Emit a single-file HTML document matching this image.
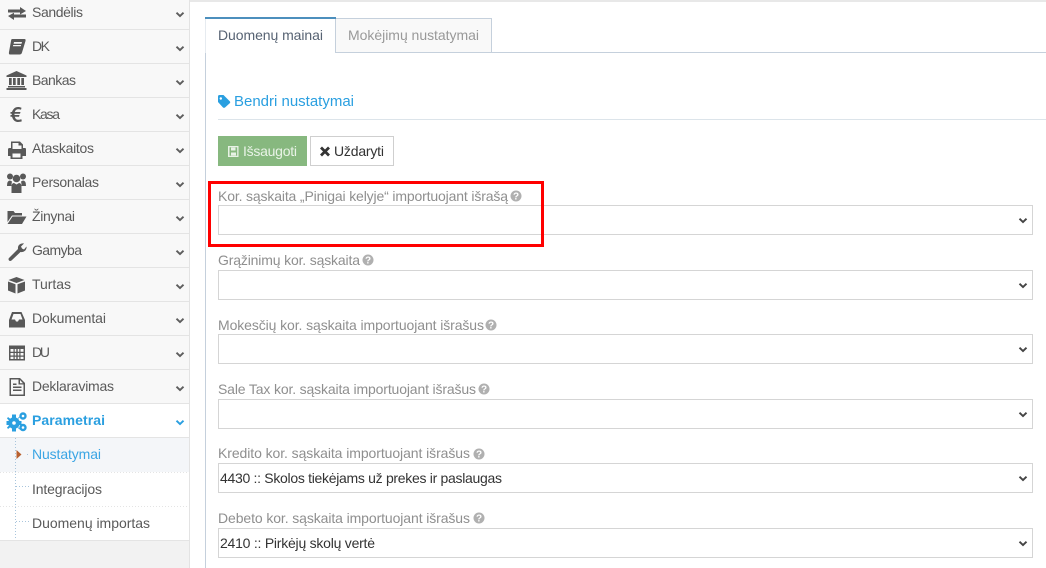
<!DOCTYPE html>
<html lang="lt"><head><meta charset="utf-8"><title>Nustatymai</title>
<style>
html,body{margin:0;padding:0;background:#fff;width:1046px;height:568px;overflow:hidden}
svg{display:block}
text{font-family:"Liberation Sans",sans-serif;font-size:14px}
.m text{fill:#5a5a5a}
.l text{fill:#8f8f8f}
</style></head><body>
<svg width="1046" height="568" viewBox="0 0 1046 568" xmlns="http://www.w3.org/2000/svg">
<defs>
<path id="ch" d="M-3.500 -1.800 L0 1.600 L3.500 -1.800" fill="none" stroke-width="1.900"/>
<g id="q"><circle r="5.500" fill="#b0b0b0"/><text x="0" y="3.700" text-anchor="middle" style="font-size:10px;font-weight:bold" fill="#fff">?</text></g>
</defs>
<!-- sidebar -->
<rect width="189" height="568" fill="#f2f2f2"/>
<rect width="189" height="403" fill="#f8f8f8"/>
<rect x="0" y="404" width="189" height="136" fill="#fff"/>
<rect x="0" y="438" width="189" height="34" fill="#f4f6f9"/>
<rect x="189" y="0" width="1" height="568" fill="#e3e3e3"/>
<g fill="#e4e4e4">
<rect y="29" width="189" height="1"/><rect y="63" width="189" height="1"/><rect y="97" width="189" height="1"/><rect y="131" width="189" height="1"/><rect y="165" width="189" height="1"/><rect y="199" width="189" height="1"/><rect y="233" width="189" height="1"/><rect y="267" width="189" height="1"/><rect y="301" width="189" height="1"/><rect y="335" width="189" height="1"/><rect y="369" width="189" height="1"/><rect y="403" width="189" height="1"/><rect y="437" width="189" height="1"/><rect y="540" width="189" height="1"/>
</g>
<path d="M0 472.500H189M0 506.500H189" stroke="#e4e4e4" stroke-dasharray="1 2"/>
<path d="M15.500 438V539" stroke="#a9c5dc" stroke-dasharray="1 2"/>
<path d="M16 486.500H29M16 521.500H29M27 454.500H29" stroke="#a9c5dc" stroke-dasharray="1 2"/>
<path d="M16.500 450L21.500 454.500L16.500 459Z" fill="#b8602f"/>
<g class="m">
<text x="32" y="17" textLength="51">Sandėlis</text>
<text x="32" y="51" textLength="18">DK</text>
<text x="32" y="85" textLength="44">Bankas</text>
<text x="32" y="119" textLength="28">Kasa</text>
<text x="32" y="153" textLength="62">Ataskaitos</text>
<text x="32" y="187" textLength="67">Personalas</text>
<text x="32" y="221" textLength="43">Žinynai</text>
<text x="32" y="255" textLength="50">Gamyba</text>
<text x="32" y="289" textLength="39">Turtas</text>
<text x="32" y="323" textLength="74">Dokumentai</text>
<text x="32" y="357" textLength="18">DU</text>
<text x="32" y="391" textLength="82">Deklaravimas</text>
<text x="32" y="494" textLength="70">Integracijos</text>
<text x="32" y="528" textLength="118">Duomenų importas</text>
</g>
<text x="32" y="425" textLength="73" fill="#2a9fe0" style="font-weight:bold">Parametrai</text>
<text x="32" y="459" textLength="69" fill="#3aa5e4">Nustatymai</text>
<!-- chevrons -->
<g stroke="#5e5e5e">
<use href="#ch" x="180" y="14.500"/><use href="#ch" x="180" y="48.500"/><use href="#ch" x="180" y="82.500"/><use href="#ch" x="180" y="116.500"/><use href="#ch" x="180" y="150.500"/><use href="#ch" x="180" y="184.500"/><use href="#ch" x="180" y="218.500"/><use href="#ch" x="180" y="252.500"/><use href="#ch" x="180" y="286.500"/><use href="#ch" x="180" y="320.500"/><use href="#ch" x="180" y="354.500"/><use href="#ch" x="180" y="388.500"/>
</g>
<use href="#ch" x="180" y="422.500" stroke="#2a9fe0"/>
<!-- sidebar icons -->
<g fill="#585858">
<path d="M8 9.500H20V7L26 11L20 14.500V12.500H8ZM26 14.500V17.500H14V20L8 16L14 12.800V14.500Z"/>
<path d="M12 39H24.500Q26 39 25.500 41L22 52.500Q21.500 54.500 19.500 54.500H10Q8.500 54.500 9 52L11 41Q11.300 39 12 39ZM14 42L13.600 43.700H21.500L22 42ZM13.200 45L12.900 46.200H20.800L21.100 45Z" fill-rule="evenodd"/>
<path d="M16.500 71L26.500 75.500V77H6.500V75.500ZM9 78H11.700V85H9ZM13 78H15.700V85H13ZM17.300 78H20V85H17.300ZM21.300 78H24V85H21.300ZM8 86H25V87.500H8ZM6.500 88H26.500V90H6.500Z"/>
<path d="M12 112C13 109 15 107 18 107C19.500 107 20.500 107.300 21.500 107.800L21 109.800C20.200 109.400 19.300 109.300 18.200 109.300C16.500 109.300 15.300 110.300 14.800 112H20.500L20 113.700H14.500V115H19.500L19 116.700H14.800C15.400 118.800 16.500 119.800 18.300 119.800C19.500 119.800 20.500 119.500 21.300 119.100L21.800 121.300C20.800 121.800 19.500 122 18.200 122C15 122 13 120 12 116.700H10.500V115H11.800V113.700H10.500V112Z"/>
<path d="M11 141.500H20L23 144.500V148H25Q26 148 26 149.500V156H22.500V159H10.500V156H8V149.500Q8 148 9.500 148H11ZM12.500 143V149H21.500V145.500H18.500V143ZM12.500 153.500V157.500H20.500V153.500Z" fill-rule="evenodd"/>
<circle cx="16.500" cy="178.500" r="3.800"/><circle cx="10" cy="176.500" r="3"/><circle cx="23" cy="176.500" r="3"/>
<path d="M7 186Q7 180.500 10 180.500L12 181.500Q11.500 183 11.500 186H9ZM26 186Q26 180.500 23 180.500L21 181.500Q21.500 183 21.500 186ZM11.500 193V187Q11.500 183 14 183L16.500 184.500L19 183Q21.500 183 21.500 187V193Z"/>
<path d="M7.500 211H13.500L15 213H22V215.500H12L7.500 222ZM12.500 216.500H26.500L22 224H7.500Z"/>
<path d="M9 258L18 249C17.500 245.500 20 243 24 243.500L21 246.500L22 248.500L24 249.500L26.500 246.500C27 250 24 252.500 20.500 252L11.500 260.500Q10 261.500 9 260.500Q8 259 9 258Z"/>
<path d="M16.500 277L24.500 280L16.500 283L8.500 280ZM8 281.500L15.500 284.300V293.500L8 290.500ZM25 281.500V290.500L17.500 293.500V284.300Z"/>
<path d="M12 312H21.500L25 320V327.500H9V320ZM13.500 314L11.500 319.500H15L16 321.500H18L19 319.500H22.500L20.500 314Z" fill-rule="evenodd"/>
<path d="M9 345.500H25V360.500H9ZM10.500 349V351.800H13.500V349ZM14.700 349V351.800H16.300V349ZM17.700 349V351.800H19.300V349ZM20.500 349V351.800H23.500V349ZM10.500 353V355.500H13.500V353ZM14.700 353V355.500H16.300V353ZM17.700 353V355.500H19.300V353ZM20.500 353V355.500H23.500V353ZM10.500 356.700V359H13.500V356.700ZM14.700 356.700V359H16.300V356.700ZM17.700 356.700V359H19.300V356.700ZM20.500 356.700V359H23.500V356.700Z" fill-rule="evenodd"/>
<path d="M9.500 378H20L25 383V396H9.500ZM11 379.500V394.500H23.500V384.500H18.500V379.500ZM13 386.500H21.500V388H13ZM13 389.500H21.500V391H13ZM13 383.500H16.500V385H13ZM20 380L23 383.200H20Z" fill-rule="evenodd"/>
</g>
<g fill="#2a9fe0">
<circle cx="14" cy="423" r="3.800" fill="none" stroke="#2a9fe0" stroke-width="4"/>
<path d="M12 414.500H16V418H12ZM12 428H16V431.500H12ZM6.500 421H9.500V425H6.500ZM18.500 421H21.500V425H18.500ZM8 417L10.500 419L9 420.500L7 418.500ZM20 417L18 419L17.500 418.500L19.500 416.500ZM8 429L10.500 427L9 425.500L7 427.500ZM20 429L18 427L17.500 427.500L19.500 429.500Z"/>
<circle cx="23" cy="416" r="2.500" fill="none" stroke="#2a9fe0" stroke-width="2.400"/>
<circle cx="23" cy="427.500" r="2.500" fill="none" stroke="#2a9fe0" stroke-width="2.400"/>
</g>
<!-- main -->
<rect x="190" y="0" width="856" height="2" fill="#e8e8e8"/>
<rect x="205" y="52" width="841" height="1" fill="#c5d0dc"/>
<rect x="205" y="53" width="1" height="515" fill="#c5d0dc"/>
<rect x="336" y="18" width="156" height="35" fill="#c5d0dc"/>
<rect x="336" y="19" width="155" height="33" fill="#f9f9f9"/>
<rect x="205" y="18" width="131" height="35" fill="#fff"/>
<rect x="205" y="17" width="131" height="2" fill="#4c8fbd"/>
<rect x="335" y="19" width="1" height="34" fill="#c5d0dc"/>
<rect x="205" y="19" width="1" height="34" fill="#e6ebf0"/>
<text x="218" y="40" textLength="105" fill="#576373">Duomenų mainai</text>
<text x="348" y="40" textLength="131" fill="#999">Mokėjimų nustatymai</text>
<path d="M218 96.500Q218 95 219.500 95H223.500L230 101.500Q230.500 102.500 230 103L225 107.500Q224 108.300 223 107.500L218 102ZM220.800 97.300A1.200 1.200 0 1 0 220.801 97.300Z" fill="#2a9fe0" fill-rule="evenodd"/>
<text x="234" y="106" textLength="120" fill="#2a9fe0" style="font-size:15px">Bendri nustatymai</text>
<rect x="218" y="119" width="828" height="1" fill="#dce4ea"/>
<rect x="218" y="136" width="89" height="30" fill="#87b87f"/>
<path d="M228 146H238.500V157H228ZM229.500 147.200V155.800H237.200V147.200ZM231 147.500V150.500H235.500V147.500ZM231 152.500V155.500H236V152.500Z" fill="#e8f2e6" fill-rule="evenodd"/>
<text x="243" y="156" textLength="54" fill="#e9f3e7">Išsaugoti</text>
<rect x="310.500" y="136.500" width="83" height="29" fill="#fff" stroke="#cfcfcf"/>
<path d="M321 147.500L329 155.500M329 147.500L321 155.500" stroke="#333" stroke-width="2.800"/>
<text x="334" y="156" textLength="50" fill="#333">Uždaryti</text>
<!-- labels -->
<g class="l">
<text x="218" y="201" textLength="290">Kor. sąskaita „Pinigai kelyje“ importuojant išrašą</text>
<text x="218" y="265" textLength="142">Grąžinimų kor. sąskaita</text>
<text x="218" y="330" textLength="266">Mokesčių kor. sąskaita importuojant išrašus</text>
<text x="218" y="394" textLength="258">Sale Tax kor. sąskaita importuojant išrašus</text>
<text x="218" y="458" textLength="252">Kredito kor. sąskaita importuojant išrašus</text>
<text x="218" y="523" textLength="252">Debeto kor. sąskaita importuojant išrašus</text>
</g>
<use href="#q" x="516" y="196"/><use href="#q" x="368" y="260"/><use href="#q" x="491" y="325"/><use href="#q" x="484" y="389"/><use href="#q" x="479" y="454"/><use href="#q" x="479" y="518"/>
<!-- selects -->
<g fill="#fff" stroke="#d5d5d5" stroke-width="1">
<rect x="218.500" y="205.500" width="814" height="29"/>
<rect x="218.500" y="270.500" width="814" height="29"/>
<rect x="218.500" y="334.500" width="814" height="29"/>
<rect x="218.500" y="399.500" width="814" height="29"/>
<rect x="218.500" y="463.500" width="814" height="29"/>
<rect x="218.500" y="528.500" width="814" height="29"/>
</g>
<g stroke="#444">
<use href="#ch" x="1023" y="220.500"/><use href="#ch" x="1023" y="285.500"/><use href="#ch" x="1023" y="349.500"/><use href="#ch" x="1023" y="414.500"/><use href="#ch" x="1023" y="478.500"/><use href="#ch" x="1023" y="543.500"/>
</g>
<text x="220" y="483" textLength="282" fill="#333">4430 :: Skolos tiekėjams už prekes ir paslaugas</text>
<text x="220" y="548" textLength="155" fill="#333">2410 :: Pirkėjų skolų vertė</text>
<!-- highlight -->
<rect x="209.500" y="182.500" width="333" height="63" fill="none" stroke="#f00" stroke-width="3"/>
</svg>
</body></html>
